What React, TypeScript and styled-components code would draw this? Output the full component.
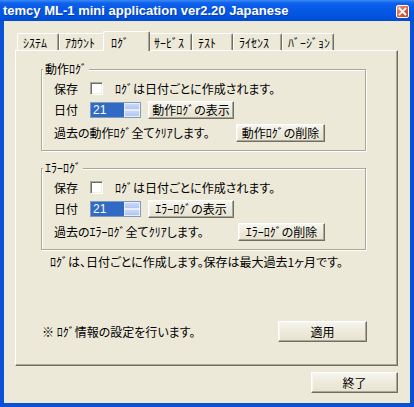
import React from "react";
import styled, { createGlobalStyle } from "styled-components";

const JP = `"Noto Sans CJK JP", "Noto Sans", sans-serif`;

const GlobalStyle = createGlobalStyle`
  html, body { margin: 0; padding: 0; background: #ECE9D8; }
  body {
    font-family: ${JP};
    font-size: 12px;
    color: #000;
    font-feature-settings: "palt" 1;
  }
  * { box-sizing: border-box; }
`;

const Window = styled.div`
  width: 414px;
  height: 407px;
  display: flex;
  flex-direction: column;
  overflow: hidden;
`;

const TitleBar = styled.div`
  height: 21px;
  flex: none;
  display: flex;
  align-items: center;
  justify-content: space-between;
  padding: 0 5px 0 3px;
  background: linear-gradient(
    to bottom,
    #3C8AF6 0px,
    #0F62EC 3px,
    #0558E6 45%,
    #0253DF 80%,
    #014ACF 100%
  );
`;

const Title = styled.span`
  font-family: "Liberation Sans", Arial, sans-serif;
  font-weight: bold;
  font-size: 13px;
  line-height: 21px;
  color: #fff;
  text-shadow: 1px 1px 0 rgba(10, 30, 120, 0.45);
  white-space: nowrap;
  font-feature-settings: normal;
`;

const CloseButton = styled.div`
  width: 13px;
  height: 13px;
  margin-top: 2px;
  border: 1px solid #fff;
  border-radius: 2px;
  background: linear-gradient(135deg, #F0A68C 0%, #DC6644 45%, #C4411F 100%);
  display: flex;
  align-items: center;
  justify-content: center;
`;

const Frame = styled.div`
  flex: 1;
  display: flex;
  flex-direction: column;
  background: #ECE9D8;
  border: 4px solid #0A51D8;
  border-top: none;
  padding: 10px 12px 10px 11px;
`;

const TabStrip = styled.div`
  height: 20px;
  margin-bottom: -1px;
  display: flex;
  align-items: flex-end;
  padding-left: 2px;
  position: relative;
  z-index: 1;
`;

const Tab = styled.div<{ $w: number; $active?: boolean }>`
  flex: none;
  width: ${(p) => p.$w + (p.$active ? 4 : 0)}px;
  height: ${(p) => (p.$active ? 20 : 17)}px;
  margin: ${(p) => (p.$active ? "0 -2px" : "0 0 1px 0")};
  border-top: 1px solid #fff;
  border-left: 1px solid #fff;
  border-right: 1px solid #716F64;
  border-radius: 2px 2px 0 0;
  box-shadow: inset -1px 0 0 #ACA899;
  background: #ECE9D8;
  padding: ${(p) => (p.$active ? "4px 0 0 7px" : "2px 0 0 5px")};
  line-height: 14px;
  white-space: nowrap;
  position: relative;
  z-index: ${(p) => (p.$active ? 2 : 1)};
`;

const Panel = styled.div`
  height: 316px;
  display: flex;
  flex-direction: column;
  border: 1px solid;
  border-color: #fff #716F64 #716F64 #fff;
  box-shadow: inset -1px -1px 0 #ACA899;
  padding: 18px 0 23px 25px;
`;

const Group = styled.div`
  position: relative;
  width: 325px;
  border: 1px solid #ACA899;
  box-shadow: inset 1px 1px 0 #fff, 1px 1px 0 #fff;
  padding: 12px 40px 8px 12px;
  display: flex;
  flex-direction: column;
  & + & {
    margin-top: 17px;
  }
`;

const Legend = styled.span`
  position: absolute;
  left: 1px;
  top: -8px;
  padding: 0 2px;
  line-height: 14px;
  background: #ECE9D8;
`;

const Text = styled.span`
  line-height: 14px;
  white-space: nowrap;
`;

const FieldLabel = styled.span`
  width: 36px;
  flex: none;
  line-height: 14px;
`;

const CheckRow = styled.div`
  height: 13px;
  display: flex;
  align-items: center;
`;

const DateRow = styled.div`
  height: 18px;
  margin-top: 6px;
  display: flex;
  align-items: center;
`;

const ClearRow = styled.div`
  height: 18px;
  margin-top: 5px;
  display: flex;
  align-items: center;
  justify-content: space-between;
`;

const CheckBox = styled.span`
  width: 13px;
  height: 13px;
  flex: none;
  margin-right: 12px;
  background: #fff;
  border: 1px solid;
  border-color: #ACA899 #fff #fff #ACA899;
  box-shadow: inset 1px 1px 0 #716F64, inset -1px -1px 0 #F1EFE2;
`;

const Spin = styled.div`
  width: 51px;
  height: 16px;
  flex: none;
  margin-right: 7px;
  display: flex;
  border: 1px solid #7F9DB9;
  background: #fff;
`;

const SpinValue = styled.span`
  flex: 1;
  background: #316AC5;
  color: #fff;
  font-family: "Liberation Sans", Arial, sans-serif;
  font-size: 12px;
  line-height: 14px;
  padding-left: 2px;
`;

const SpinButtons = styled.div`
  width: 16px;
  display: flex;
  flex-direction: column;
`;

const SpinHalf = styled.span`
  flex: 1;
  border: 1px solid #E6ECFB;
  border-radius: 1px;
  background: linear-gradient(to bottom, #CBD8F8, #B3C5F0);
`;

const Button = styled.button<{ $w: number; $h?: number }>`
  width: ${(p) => p.$w}px;
  height: ${(p) => p.$h ?? 18}px;
  flex: none;
  padding: 0;
  margin: 0;
  font-family: ${JP};
  font-size: 12px;
  font-feature-settings: "palt" 1;
  line-height: 14px;
  color: #000;
  display: flex;
  align-items: center;
  justify-content: center;
  background: linear-gradient(to bottom, #F5F4EF 0%, #ECE9D8 60%, #E6E3D2 100%);
  border: 1px solid;
  border-color: #fff #716F64 #716F64 #fff;
  box-shadow: inset -1px -1px 0 #ACA899, inset 1px 1px 0 #F7F6F1;
  white-space: nowrap;
`;

const Note = styled.div`
  margin: 5px 0 0 9px;
  line-height: 14px;
  white-space: nowrap;
`;

const BottomRow = styled.div`
  margin-top: auto;
  padding: 0 30px 0 1px;
  display: flex;
  align-items: center;
  justify-content: space-between;
`;

const Footer = styled.div`
  margin-top: 6px;
  display: flex;
  justify-content: flex-end;
`;

const tabs: { label: string; w: number; active?: boolean }[] = [
  { label: "ｼｽﾃﾑ", w: 42 },
  { label: "ｱｶｳﾝﾄ", w: 46 },
  { label: "ﾛｸﾞ", w: 43, active: true },
  { label: "ｻｰﾋﾞｽ", w: 44 },
  { label: "ﾃｽﾄ", w: 41 },
  { label: "ﾗｲｾﾝｽ", w: 49 },
  { label: "ﾊﾞｰｼﾞｮﾝ", w: 52 },
];

type LogGroupProps = { name: string; clearW: number };

const LogGroup = ({ name, clearW }: LogGroupProps) => (
  <Group>
    <Legend>{name}</Legend>
    <CheckRow>
      <FieldLabel>保存</FieldLabel>
      <CheckBox />
      <Text>ﾛｸﾞは日付ごとに作成されます。</Text>
    </CheckRow>
    <DateRow>
      <FieldLabel>日付</FieldLabel>
      <Spin>
        <SpinValue>21</SpinValue>
        <SpinButtons>
          <SpinHalf />
          <SpinHalf />
        </SpinButtons>
      </Spin>
      <Button $w={86}>{name}の表示</Button>
    </DateRow>
    <ClearRow>
      <Text>過去の{name}全てｸﾘｱします。</Text>
      <Button $w={clearW}>{name}の削除</Button>
    </ClearRow>
  </Group>
);

export default function App() {
  return (
    <>
      <GlobalStyle />
      <Window>
        <TitleBar>
          <Title>temcy ML-1 mini application ver2.20 Japanese</Title>
          <CloseButton>
            <svg width="9" height="9" viewBox="0 0 9 9">
              <path d="M1.5 1.5 L7.5 7.5 M7.5 1.5 L1.5 7.5" stroke="#fff" strokeWidth="1.8" strokeLinecap="square" />
            </svg>
          </CloseButton>
        </TitleBar>
        <Frame>
          <TabStrip>
            {tabs.map((t) => (
              <Tab key={t.label} $w={t.w} $active={t.active}>
                {t.label}
              </Tab>
            ))}
          </TabStrip>
          <Panel>
            <LogGroup name="動作ﾛｸﾞ" clearW={89} />
            <LogGroup name="ｴﾗｰﾛｸﾞ" clearW={87} />
            <Note>ﾛｸﾞは、日付ごとに作成します。保存は最大過去1ヶ月です。</Note>
            <BottomRow>
              <Text>※ ﾛｸﾞ情報の設定を行います。</Text>
              <Button $w={89} $h={21}>適用</Button>
            </BottomRow>
          </Panel>
          <Footer>
            <Button $w={87} $h={21}>終了</Button>
          </Footer>
        </Frame>
      </Window>
    </>
  );
}
